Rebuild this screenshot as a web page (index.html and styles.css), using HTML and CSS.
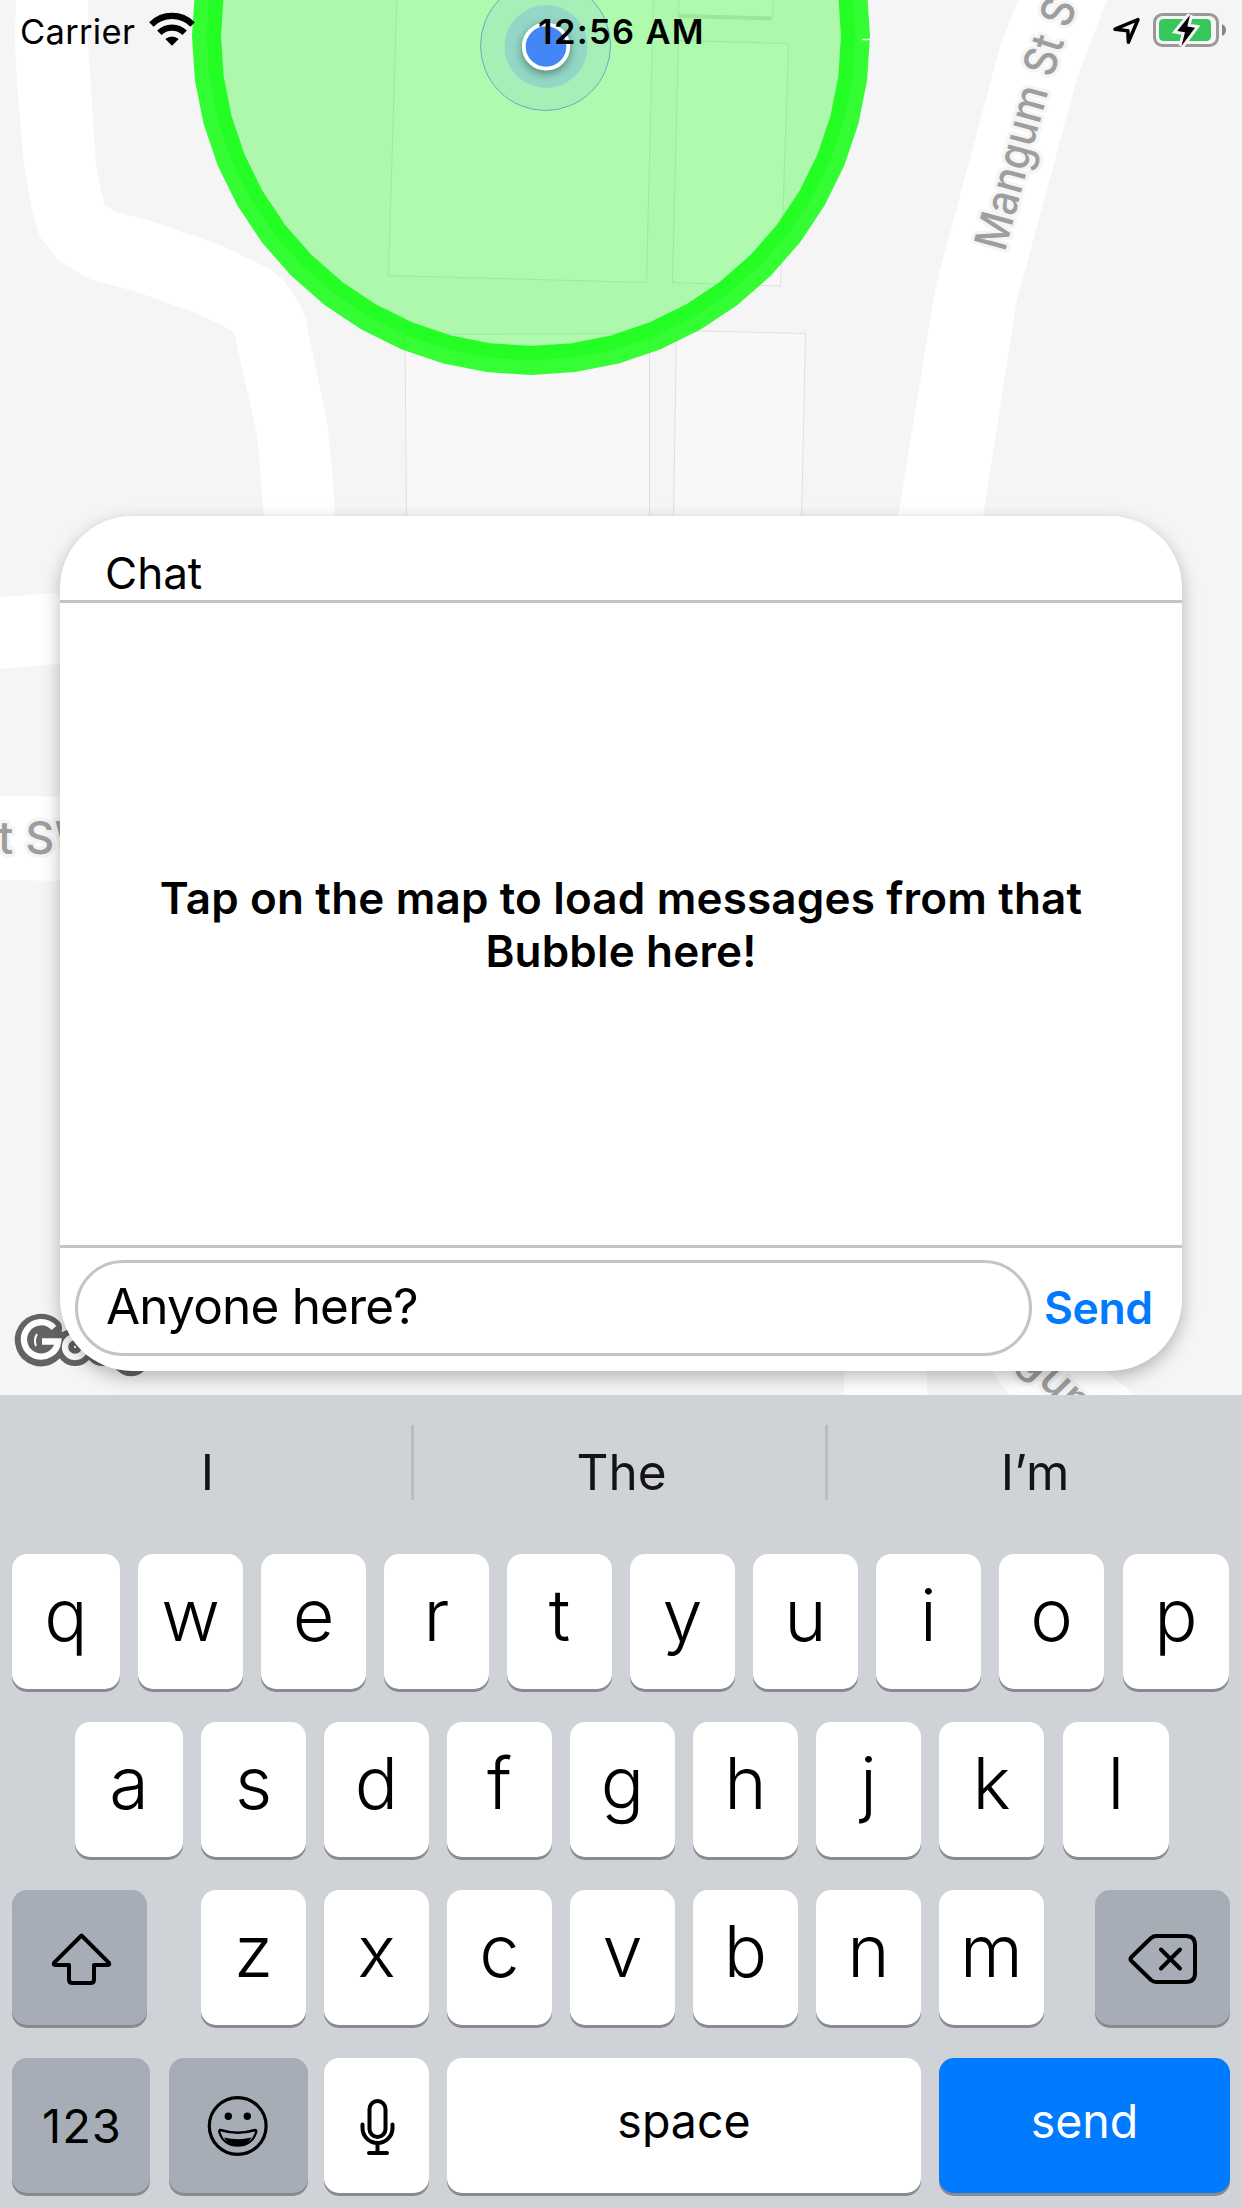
FILE: index.html
```html
<!DOCTYPE html>
<html lang="en">
<head>
<meta charset="utf-8">
<title>Bubble chat</title>
<link rel="stylesheet" href="styles.css">
</head>
<body>
<main class="screen">
  <svg class="map" viewBox="0 0 1242 1395" aria-hidden="true">
    <rect width="1242" height="1395" fill="#f5f5f5"/>
    <g class="building">
      <path d="M397 -5 L388.500 275.500 L646.500 282.500 L653.500 -5Z"/>
      <path d="M678.500 40.500 L788.500 43.500 L780.500 286 L672.500 282.500Z"/>
      <path d="M679 -5 L678.500 14.500 L772.500 17.500 L773.500 -5Z"/>
      <path d="M405 334.500 L649.500 333.500 V520 H406.500Z"/>
      <path d="M676.500 330.500 L805.500 333.500 L801.500 520 H673.500Z"/>
    </g>
    <path d="M678 16 L772 18.500" stroke="#dedede" stroke-width="4"/>
    <g class="road">
      <path d="M16 0 L15 40 L17 83 L24 165 L32 210 L40 237 L57 259 L85 277 L95 281 L134 291 L196 313 L231 330 L235 337 L256 430 L259 455 L264 520 H335.500 L333 480 L327 422 L305 316 L299 303 L285 282 L272 270 L223 246 L154 222 L117 212 L105 205 L101 191 L96 165 L88 43 L88 0Z"/>
      <path d="M0 597 L80 591.500 V662 L0 669Z"/>
      <path d="M0 796 L80 797 V881 L0 880Z"/>
      <path d="M1018 0 L1000 47 L936 285 L931 315 L897.500 520 H982.500 L1016.500 302 L1078 75 L1107 0Z"/>
      <path d="M844 1360 H927 V1395 H844Z"/>
      <path d="M975 1350 L1010 1395 H1135 L1080 1350Z"/>
    </g>
    <path id="mangum" d="M1004.700 252.500 L1048 92 L1064 42 L1090 -30" fill="none"/>
    <g class="street">
      <text textLength="258" lengthAdjust="spacingAndGlyphs" word-spacing="2"><textPath href="#mangum">Mangum St S</textPath></text>
      <text x="-2" y="854">t SW</text>
      <text transform="translate(1017 1362) rotate(45)">gum</text>
    </g>
    <polygon class="zone" points="844.400,-48 852.700,-6.300 855.500,36 852.700,78.300 844.400,120 830.800,160.200 812,198.300 788.500,233.600 760.500,265.500 728.600,293.500 693.300,317 655.200,335.800 615,349.400 573.300,357.700 531,360.500 488.700,357.700 447,349.400 406.800,335.800 368.700,317 333.400,293.500 301.500,265.500 273.500,233.600 250,198.300 231.200,160.200 217.600,120 209.300,78.300 206.500,36 209.300,-6.300 217.600,-48"/>
    <path d="M862 39.500 H870" stroke="#fff" stroke-width="1.500"/>
    <circle cx="545.500" cy="45.500" r="65" fill="#4285f4" fill-opacity=".09" stroke="#5db0c0" stroke-width="1"/>
    <circle cx="546" cy="46.500" r="41.500" fill="#93d8c6"/>
    <circle class="dot" cx="546" cy="46.500" r="22.200" fill="#4386f5" stroke="#fff" stroke-width="3.800"/>
    <g fill="none" stroke-linecap="butt">
      <g stroke="#636363" stroke-width="18.500" stroke-linecap="round">
        <path d="M53 1328 A17 17 0 1 0 58 1341 H43" fill="#636363"/>
        <circle cx="75" cy="1347" r="9.700"/>
        <circle cx="103" cy="1347" r="9.700"/>
        <circle cx="131" cy="1347" r="9.700"/>
        <path d="M120 1360 Q131 1374 142 1360"/>
      </g>
      <g stroke="#fff" stroke-width="6.300">
        <path d="M54 1328 A17.200 17.200 0 1 0 58.200 1341.500 H42"/>
        <circle cx="75" cy="1347" r="10"/>
        <circle cx="103" cy="1347" r="10"/>
      </g>
      <path d="M37 1334 Q33.500 1340 36 1346" stroke="#fff" stroke-width="2"/>
      <circle cx="75" cy="1347" r="1.200" fill="#fff"/>
    </g>
  </svg>

  <header class="status">
    <div class="status-left">
      <span class="carrier">Carrier</span>
      <svg class="wifi" width="46" height="34" viewBox="149 12 46 34">
        <g fill="none" stroke="#000" stroke-width="6.300">
          <path d="M151.400 24.400 A29.300 29.300 0 0 1 192.600 24.400"/>
          <path d="M159.300 32.800 A18.300 18.300 0 0 1 184.700 32.800"/>
        </g>
        <path d="M172 45.700 L165.300 39 A10 10 0 0 1 178.700 39Z"/>
      </svg>
    </div>
    <time class="clock">12:56 AM</time>
    <svg class="indicators" width="116" height="36" viewBox="1112 12 116 36">
      <path d="M1138 19.500 L1115 29.200 L1127.800 30.700 L1128.400 42.200Z" fill="none" stroke="#000" stroke-width="3.500" stroke-linejoin="round"/>
      <rect x="1154.500" y="14.500" width="63" height="31" rx="8" fill="#f5f5f5" stroke="#999" stroke-width="3"/>
      <rect x="1159" y="19" width="52" height="22" rx="4.500" fill="#35c759"/>
      <path d="M1222 24 Q1226 26 1226 30 Q1226 34 1222 36Z" fill="#858585"/>
      <path d="M1190 15 L1177.300 31 L1185 32.300 L1181.500 46 L1195 27.700 L1187.300 26.500Z" stroke="#f5f5f5" stroke-width="6"/>
      <path d="M1190 15 L1177.300 31 L1185 32.300 L1181.500 46 L1195 27.700 L1187.300 26.500Z"/>
    </svg>
  </header>

  <section class="card">
    <h1 class="card-title">Chat</h1>
    <div class="card-body"><p class="hint">Tap on the map to load messages from that<br>Bubble here!</p></div>
    <div class="composer">
      <div class="field"><span>Anyone here?</span></div>
      <button class="send-link">Send</button>
    </div>
  </section>

  <section class="keyboard">
    <div class="suggestions"><span>I</span><i></i><span>The</span><i></i><span>I’m</span></div>
    <div class="row row-1">
      <b class="key">q</b><b class="key">w</b><b class="key">e</b><b class="key">r</b><b class="key">t</b><b class="key">y</b><b class="key">u</b><b class="key">i</b><b class="key">o</b><b class="key">p</b>
    </div>
    <div class="row row-2">
      <b class="key">a</b><b class="key">s</b><b class="key">d</b><b class="key">f</b><b class="key">g</b><b class="key">h</b><b class="key">j</b><b class="key">k</b><b class="key">l</b>
    </div>
    <div class="row row-3">
      <b class="key dark">
        <svg width="135" height="135" viewBox="0 0 135 135"><path d="M69.500 45.500 L96.500 72.300 Q98.500 75 95.500 75 H82 V89.500 Q82 93 78.500 93 H60.500 Q57 93 57 89.500 V75 H43.500 Q40.500 75 42.500 72.300Z" fill="none" stroke="#000" stroke-width="4" stroke-linejoin="round"/></svg>
      </b>
      <b class="key">z</b><b class="key">x</b><b class="key">c</b><b class="key">v</b><b class="key">b</b><b class="key">n</b><b class="key">m</b>
      <b class="key dark">
        <svg width="135" height="135" viewBox="0 0 135 135"><g fill="none" stroke="#000" stroke-width="4" stroke-linecap="round"><path d="M61 46 H91 Q100 46 100 55 V83 Q100 92 91 92 H61 Q58.500 92 56 90 L36.500 71 Q34.500 69 36.500 67 L56 48 Q58.500 46 61 46Z"/><path d="M66 59.500 L85 78.500 M85 59.500 L66 78.500"/></g></svg>
      </b>
    </div>
    <div class="row row-4">
      <b class="key dark num">123</b>
      <b class="key dark">
        <svg width="139" height="135" viewBox="0 0 139 135"><g fill="none" stroke="#000" stroke-width="3.200"><circle cx="68.700" cy="68" r="28.400"/><path d="M51.500 72 Q49.800 72 50.500 74.500 C53 83 60 87.500 68.700 87.500 C77.500 87.500 84.500 83 87 74.500 Q87.700 72 86 72 Q68.700 77.500 51.500 72Z" stroke-width="2.400"/></g><circle cx="59.300" cy="58.300" r="3.700"/><circle cx="78.300" cy="58.300" r="3.700"/><path d="M55 79.500 Q68.700 83 82.500 79.500 Q78 88 68.700 88 Q59.500 88 55 79.500Z"/></svg>
      </b>
      <b class="key">
        <svg width="105" height="135" viewBox="0 0 105 135"><g fill="none" stroke="#000" stroke-width="4" stroke-linecap="round"><rect x="45.500" y="43" width="16" height="36" rx="8"/><path d="M38.500 66.500 V70 A15 15 0 0 0 68.500 70 V66.500 M53.500 85 V95 M45 95 H63"/></g></svg>
      </b>
      <b class="key word">space</b>
      <b class="key word blue">send</b>
    </div>
  </section>
</main>
</body>
</html>
```
FILE: styles.css
```css
* { box-sizing: border-box; }
body { margin: 0; font-family: Inter, "Liberation Sans", sans-serif; color: #000; }
.screen { position: relative; width: 1242px; height: 2208px; overflow: hidden; display: flex; flex-direction: column; background: #f5f5f5; }

/* Map behind everything */
.map { position: absolute; left: 0; top: 0; width: 1242px; height: 1395px; }
.building path { fill: #f8f8f8; stroke: #e0e0e0; stroke-width: 1; }
.road path { fill: #fff; }
.street text { font: 550 45px Inter, sans-serif; fill: #9e9e9e; stroke: #f5f5f5; stroke-width: 7px; stroke-linejoin: round; paint-order: stroke; }
.zone { fill: rgba(0, 255, 0, .29); stroke: rgba(0, 255, 0, .79); stroke-width: 29px; }
.dot { filter: drop-shadow(0 3px 5px rgba(0, 0, 0, .4)); }

/* Status bar */
.status { position: relative; height: 63px; display: grid; grid-template-columns: 1fr auto 1fr; line-height: 63px; padding: 0 14px 0 20px; }
.status-left { display: flex; }
.carrier { width: 129px; font-size: 34.500px; letter-spacing: .3px; }
.wifi { margin-top: 12px; }
.clock { font-size: 34.500px; font-weight: 560; letter-spacing: 1.300px; margin-right: 5px; }
.indicators { margin-top: 12px; justify-self: end; }

/* Chat card */
.card { position: relative; margin: 453px 60px 24px; height: 855px; border-radius: 72px; background: #fff; box-shadow: 0 6px 18px rgba(0, 0, 0, .27); display: flex; flex-direction: column; }
.card-title { margin: 0; height: 87px; padding: 30px 45px 0; border-bottom: 3px solid #c4c4c4; font-size: 44px; font-weight: 400; line-height: 54px; }
.card-body { flex: 1; display: flex; align-items: center; justify-content: center; }
.hint { margin: 0; padding-top: 1px; text-align: center; font-size: 44px; font-weight: 600; line-height: 53px; letter-spacing: .17px; white-space: nowrap; }
.composer { height: 126px; border-top: 3px solid #c4c4c4; display: flex; padding: 12px 15px 15px; }
.field { width: 957px; height: 96px; border: 3px solid #c4c4c4; border-radius: 48px; padding: 0 28px 4px; display: flex; align-items: center; font-size: 49.500px; letter-spacing: -.800px; }
.send-link { border: 0; background: none; padding: 0 0 0 12px; font: 600 44.500px Inter, sans-serif; letter-spacing: -.4px; color: #007aff; height: 96px; }

/* Keyboard */
.keyboard { position: relative; flex: 1; background: #cfd2d7; }
.suggestions { height: 159px; display: grid; grid-template-columns: 411px 3px 411px 3px 414px; text-align: center; font-size: 49.500px; line-height: 154px; color: #141414; }
.suggestions span:nth-of-type(-n+2) { padding-left: 4px; }
.suggestions i { margin-top: 30px; height: 75px; background: #b9bcc1; }
.row { display: grid; column-gap: 18px; height: 135px; margin-bottom: 33px; padding-left: 12px; }
.row-1 { grid-template-columns: 108px repeat(8, 105px) 107px; }
.row-2 { grid-template-columns: 108px repeat(7, 105px) 107px; padding-left: 75px; }
.row-1 .key:last-child, .row-2 .key:last-child { margin-left: 1px; }
.row-3 { grid-template-columns: 171px repeat(7, 105px) 168px; }
.row-3 .key:first-child { width: 135px; }
.row-3 .key:last-child { width: 135px; justify-self: end; }
.row-4 { grid-template-columns: 138px 138px 105px 474px 291px; margin-bottom: 0; }
.row-4 .key:nth-child(2) { margin: 0 -2px 0 1px; }
.key { display: flex; align-items: center; justify-content: center; height: 135px; border-radius: 15px; background: #fff; box-shadow: 0 3px 0 #898a8d; font-size: 72px; font-weight: 350; line-height: 88px; padding-bottom: 14px; }
.key:has(svg), .num.key { padding-bottom: 0; }
.dark { background: #a6adb7; }
.num { font-size: 47px; font-weight: 400; letter-spacing: 1px; padding-left: 2px; }
.word { font-size: 46.500px; font-weight: 400; padding-bottom: 9px; }
.blue { background: #007aff; color: #fff; }
```
